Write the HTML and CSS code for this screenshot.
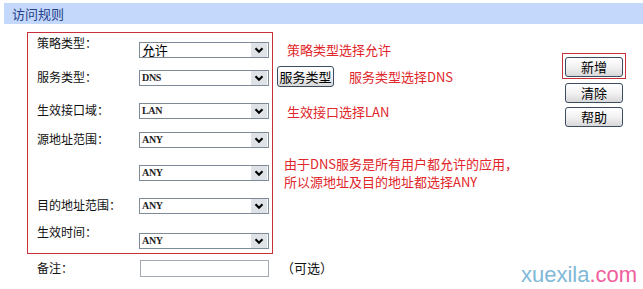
FILE: index.html
```html
<!DOCTYPE html>
<html lang="zh">
<head>
<meta charset="utf-8">
<title>访问规则</title>
<link rel="stylesheet" href="styles.css">
</head>
<body>
<div class="header">访问规则</div>
<div class="main">
  <div class="form">
    <div class="box"></div>

    <div class="label r1 up">策略类型：</div>
    <div class="sel r1"><span class="val cjk">允许</span><span class="arr"><svg viewBox="0 0 16 16" width="16" height="14"><polyline points="4,6 8,10 12,6" fill="none" stroke="#000" stroke-width="2.4"/></svg></span></div>
    <div class="note r1 n1">策略类型选择允许</div>

    <div class="label r2">服务类型：</div>
    <div class="sel r2"><span class="val">DNS</span><span class="arr"><svg viewBox="0 0 16 16" width="16" height="14"><polyline points="4,6 8,10 12,6" fill="none" stroke="#000" stroke-width="2.4"/></svg></span></div>
    <div class="svc r2"><button class="btn svcbtn">服务类型</button><span class="note">服务类型选择DNS</span></div>

    <div class="label r3">生效接口域：</div>
    <div class="sel r3"><span class="val">LAN</span><span class="arr"><svg viewBox="0 0 16 16" width="16" height="14"><polyline points="4,6 8,10 12,6" fill="none" stroke="#000" stroke-width="2.4"/></svg></span></div>
    <div class="note r3 n3">生效接口选择LAN</div>

    <div class="label r4">源地址范围：</div>
    <div class="sel r4"><span class="val">ANY</span><span class="arr"><svg viewBox="0 0 16 16" width="16" height="14"><polyline points="4,6 8,10 12,6" fill="none" stroke="#000" stroke-width="2.4"/></svg></span></div>

    <div class="sel r5"><span class="val">ANY</span><span class="arr"><svg viewBox="0 0 16 16" width="16" height="14"><polyline points="4,6 8,10 12,6" fill="none" stroke="#000" stroke-width="2.4"/></svg></span></div>
    <div class="note para"><div class="pl">由于DNS服务是所有用户都允许的应用，</div><div class="pl">所以源地址及目的地址都选择ANY</div></div>

    <div class="label r6">目的地址范围：</div>
    <div class="sel r6"><span class="val">ANY</span><span class="arr"><svg viewBox="0 0 16 16" width="16" height="14"><polyline points="4,6 8,10 12,6" fill="none" stroke="#000" stroke-width="2.4"/></svg></span></div>

    <div class="label r7 up">生效时间：</div>
    <div class="sel r7"><span class="val">ANY</span><span class="arr"><svg viewBox="0 0 16 16" width="16" height="14"><polyline points="4,6 8,10 12,6" fill="none" stroke="#000" stroke-width="2.4"/></svg></span></div>

    <div class="label r8 lab8">备注：</div>
    <div class="input r8"></div>
    <div class="opt r8">（可选）</div>
  </div>
  <div class="actions">
    <div class="hl"><button class="btn act">新增</button></div>
    <button class="btn act">清除</button>
    <button class="btn act">帮助</button>
  </div>
</div>
<div class="mark">xuexila<span class="com">.com</span></div>
</body>
</html>
```

FILE: styles.css
```css
html, body {
  margin: 0;
  padding: 0;
  background: #fff;
  font-family: "Noto Sans CJK SC", "Liberation Sans", sans-serif;
  color: #111;
}
body {
  width: 643px;
  height: 289px;
  position: relative;
  overflow: hidden;
}
.header {
  margin: 3px 0 0 4px;
  height: 21px;
  line-height: 21px;
  padding-left: 8px;
  background: #c3d8fb;
  color: #23408a;
  font-size: 13px;
}
.main {
  display: flex;
  margin-top: 8px;
}
.form {
  margin-left: 27px;
  width: 535px;
  display: grid;
  grid-template-columns: 112px 134px 1fr;
  grid-template-rows: 28px 33px 29px 33px 33px 35px 31px 30px;
}
.box {
  grid-row: 1 / 8;
  grid-column: 1 / 3;
  border: 1px solid #c8303a;
}
.r1 { grid-row: 1; }
.r2 { grid-row: 2; }
.r3 { grid-row: 3; }
.r4 { grid-row: 4; }
.r5 { grid-row: 5; }
.r6 { grid-row: 6; }
.r7 { grid-row: 7; }
.r8 { grid-row: 8; }
.label {
  grid-column: 1;
  padding-left: 10px;
  margin-top: 9px;
  font-size: 12px;
  line-height: 16px;
  color: #111;
  align-self: start;
}
.label.up { margin-top: 3px; }
.r7.up { margin-top: 1px; }
.lab8 { margin-top: 6px; }
.sel {
  grid-column: 2;
  align-self: start;
  margin-top: 10px;
  width: 130px;
  height: 16px;
  box-sizing: border-box;
  border: 1px solid #7e8a96;
  display: flex;
  align-items: center;
  background: #fff;
}
.val {
  flex: 1;
  padding-left: 2px;
  font-family: "Liberation Serif", serif;
  font-weight: bold;
  font-size: 10px;
  letter-spacing: -0.3px;
  color: #222;
  line-height: 14px;
}
.val.cjk {
  font-family: "Noto Sans CJK SC", sans-serif;
  font-weight: normal;
  font-size: 13px;
  color: #000;
}
.arr {
  width: 16px;
  height: 14px;
  margin-right: 1px;
  background: #dfe3e8;
  display: flex;
  align-items: center;
  justify-content: center;
}
.arr svg { display: block; }
.note {
  color: #e0262a;
  font-size: 13px;
  line-height: 16px;
}
.n1 {
  grid-column: 3;
  margin: 10px 0 0 14px;
  align-self: start;
}
.n3 {
  grid-column: 3;
  margin: 11px 0 0 14px;
  align-self: start;
}
.svc {
  grid-column: 3;
  align-self: start;
  margin: 6px 0 0 4px;
  display: flex;
  align-items: center;
}
.svc .note { margin-left: 15px; }
.btn {
  font-family: "Noto Sans CJK SC", sans-serif;
  font-size: 13px;
  color: #000;
  border: 1px solid #3a4d63;
  border-radius: 3px;
  background: linear-gradient(#ffffff, #f2f2f2 50%, #d8d8d8);
  padding: 0;
  line-height: 18px;
  box-sizing: border-box;
}
.svcbtn {
  width: 57px;
  height: 21px;
}
.para {
  grid-row: 4 / 7;
  grid-column: 3;
  align-self: center;
  margin-left: 11px;
}
.pl {
  line-height: 18px;
}
.input {
  grid-column: 2;
  align-self: start;
  margin: 6px 0 0 1px;
  width: 129px;
  height: 17px;
  box-sizing: border-box;
  border: 1px solid #a3aab3;
}
.opt {
  grid-column: 3;
  align-self: start;
  margin: 6px 0 0 8px;
  font-size: 13px;
  line-height: 16px;
  color: #111;
}
.actions {
  display: flex;
  flex-direction: column;
  padding-top: 21px;
  width: 64px;
}
.hl {
  border: 1px solid #c8303a;
  padding: 3px 2px 1px 2px;
  width: 64px;
  box-sizing: border-box;
}
.act {
  width: 58px;
  height: 20px;
  display: block;
}
.actions > .act {
  margin-left: 3px;
  margin-top: 4px;
}
.actions > .act + .act { margin-top: 4px; }
.mark {
  position: absolute;
  left: 521px;
  top: 262px;
  font-family: "Liberation Sans", Arial, sans-serif;
  font-size: 22px;
  line-height: 26px;
  color: #80b8d8;
}
.com { color: #f0609c; }
```
